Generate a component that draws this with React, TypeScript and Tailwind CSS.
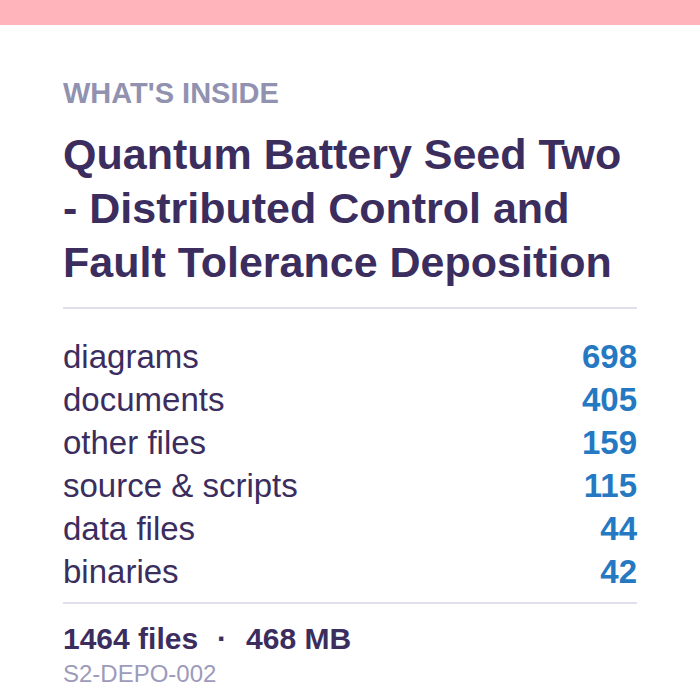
const rows = [
  { label: "diagrams", count: 698 },
  { label: "documents", count: 405 },
  { label: "other files", count: 159 },
  { label: "source & scripts", count: 115 },
  { label: "data files", count: 44 },
  { label: "binaries", count: 42 },
];

export default function App() {
  return (
    <div className="min-h-[700px] bg-white font-['Liberation_Sans',Arial,sans-serif]">
      <div className="h-[25px] bg-[#ffb3ba]" />
      <div className="px-[63px] pt-[51px]">
        <div className="text-[29px] leading-[1.2] font-bold uppercase text-[#9191b0]">
          What's inside
        </div>
        <h1 className="mt-[16px] text-[43px] leading-[54px] font-bold text-[#3b2d5e]">
          Quantum Battery Seed Two - Distributed Control and Fault Tolerance Deposition
        </h1>
        <div className="mt-[18px] border-t-2 border-[#e0dfee]" />
        <ul className="pt-[26px] pb-[9px]">
          {rows.map((r) => (
            <li
              key={r.label}
              className="flex items-center justify-between text-[33px] leading-[43px] text-[#3b2d5e]"
            >
              <span>{r.label}</span>
              <span className="font-bold text-[#2579c2]">{r.count}</span>
            </li>
          ))}
        </ul>
        <div className="border-t-2 border-[#e0dfee]" />
        <div className="mt-[15px] flex items-center text-[30px] leading-[39px] font-bold text-[#3b2d5e]">
          <span>1464 files</span>
          <span className="mx-[19px]">·</span>
          <span>468 MB</span>
        </div>
        <div className="text-[24px] leading-[1.3] text-[#9d9bbb]">S2-DEPO-002</div>
      </div>
    </div>
  );
}
